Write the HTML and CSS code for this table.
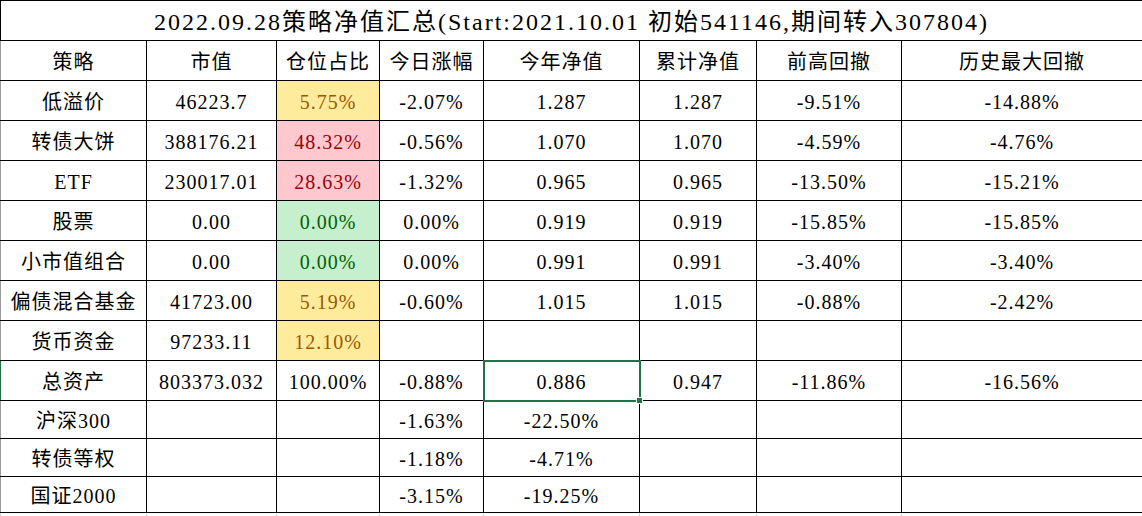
FILE: index.html
```html
<!DOCTYPE html>
<html lang="zh-CN">
<head>
<meta charset="utf-8">
<title>策略净值汇总</title>
<link rel="stylesheet" href="styles.css">
</head>
<body>
<table class="sheet">
  <colgroup>
    <col class="w1"><col class="w2"><col class="w3"><col class="w4">
    <col class="w5"><col class="w6"><col class="w7"><col class="w8">
  </colgroup>
  <tbody>
    <tr class="r-title"><td class="title" colspan="8">2022.09.28策略净值汇总(Start:2021.10.01 初始541146,期间转入307804)</td></tr>
    <tr class="r40"><td class="first">策略</td><td>市值</td><td>仓位占比</td><td>今日涨幅</td><td>今年净值</td><td>累计净值</td><td>前高回撤</td><td>历史最大回撤</td></tr>
    <tr class="r40"><td class="first">低溢价</td><td>46223.7</td><td class="warn">5.75%</td><td>-2.07%</td><td>1.287</td><td>1.287</td><td>-9.51%</td><td>-14.88%</td></tr>
    <tr class="r40"><td class="first">转债大饼</td><td>388176.21</td><td class="bad">48.32%</td><td>-0.56%</td><td>1.070</td><td>1.070</td><td>-4.59%</td><td>-4.76%</td></tr>
    <tr class="r40"><td class="first">ETF</td><td>230017.01</td><td class="bad">28.63%</td><td>-1.32%</td><td>0.965</td><td>0.965</td><td>-13.50%</td><td>-15.21%</td></tr>
    <tr class="r40"><td class="first">股票</td><td>0.00</td><td class="good">0.00%</td><td>0.00%</td><td>0.919</td><td>0.919</td><td>-15.85%</td><td>-15.85%</td></tr>
    <tr class="r40"><td class="first">小市值组合</td><td>0.00</td><td class="good">0.00%</td><td>0.00%</td><td>0.991</td><td>0.991</td><td>-3.40%</td><td>-3.40%</td></tr>
    <tr class="r40"><td class="first">偏债混合基金</td><td>41723.00</td><td class="warn">5.19%</td><td>-0.60%</td><td>1.015</td><td>1.015</td><td>-0.88%</td><td>-2.42%</td></tr>
    <tr class="r40"><td class="first">货币资金</td><td>97233.11</td><td class="warn">12.10%</td><td></td><td></td><td></td><td></td><td></td></tr>
    <tr class="r40 total"><td class="first">总资产</td><td>803373.032</td><td>100.00%</td><td>-0.88%</td><td class="active">0.886</td><td>0.947</td><td>-11.86%</td><td>-16.56%</td></tr>
    <tr class="r38"><td class="first">沪深300</td><td></td><td></td><td>-1.63%</td><td>-22.50%</td><td></td><td></td><td></td></tr>
    <tr class="r38"><td class="first">转债等权</td><td></td><td></td><td>-1.18%</td><td>-4.71%</td><td></td><td></td><td></td></tr>
    <tr class="r36"><td class="first">国证2000</td><td></td><td></td><td>-3.15%</td><td>-19.25%</td><td></td><td></td><td></td></tr>
    <tr class="filler"><td></td><td></td><td></td><td></td><td></td><td></td><td></td><td></td></tr>
  </tbody>
</table>
</body>
</html>
```
FILE: styles.css
```css
html, body {
  margin: 0;
  padding: 0;
  background: #ffffff;
  overflow: hidden;
}

.sheet {
  border-collapse: collapse;
  table-layout: fixed;
  width: 1142px;
  font-family: "Liberation Serif", "Noto Sans CJK SC", serif;
  font-size: 20px;
  letter-spacing: 1px;
  color: #000000;
}

.w1 { width: 146px; }
.w2 { width: 130px; }
.w3 { width: 103px; }
.w4 { width: 104px; }
.w5 { width: 156px; }
.w6 { width: 117px; }
.w7 { width: 145px; }
.w8 { width: 241px; }

.sheet td {
  border: 1px solid #000000;
  padding: 2px 0 0 0;
  text-align: center;
  vertical-align: middle;
  white-space: nowrap;
  overflow: visible;
  line-height: 20px;
}

.sheet td.first {
  border-left-color: #9a9a9a;
}

.r-title td { height: 36px; }
.r40 td { height: 37px; }
.r38 td { height: 35px; }
.r36 td { height: 33px; }

.title {
  font-size: 24px;
  letter-spacing: 2px;
}

.sheet td.title {
  padding-top: 3px;
  line-height: 24px;
}

.warn { background: #ffeb9c; color: #9c5700; }
.bad { background: #ffc7ce; color: #9c0006; }
.good { background: #c6efce; color: #006100; }

.total td.first {
  border-left-color: #217346;
}

.sheet td.active {
  position: relative;
}

.sheet td.active::after {
  content: "";
  position: absolute;
  left: -1px;
  top: -1px;
  right: -2px;
  bottom: -2px;
  border: 2px solid #217346;
  pointer-events: none;
}

.sheet td.active::before {
  content: "";
  position: absolute;
  right: -4px;
  bottom: -4px;
  width: 5px;
  height: 5px;
  background: #217346;
  border: 1px solid #ffffff;
  z-index: 1;
}

.sheet .filler td {
  height: 8px;
  padding: 0;
  line-height: 0;
  border-top: none;
  border-bottom: none;
  border-left: 1px solid #d4d4d4;
  border-right: 1px solid #d4d4d4;
}
```
